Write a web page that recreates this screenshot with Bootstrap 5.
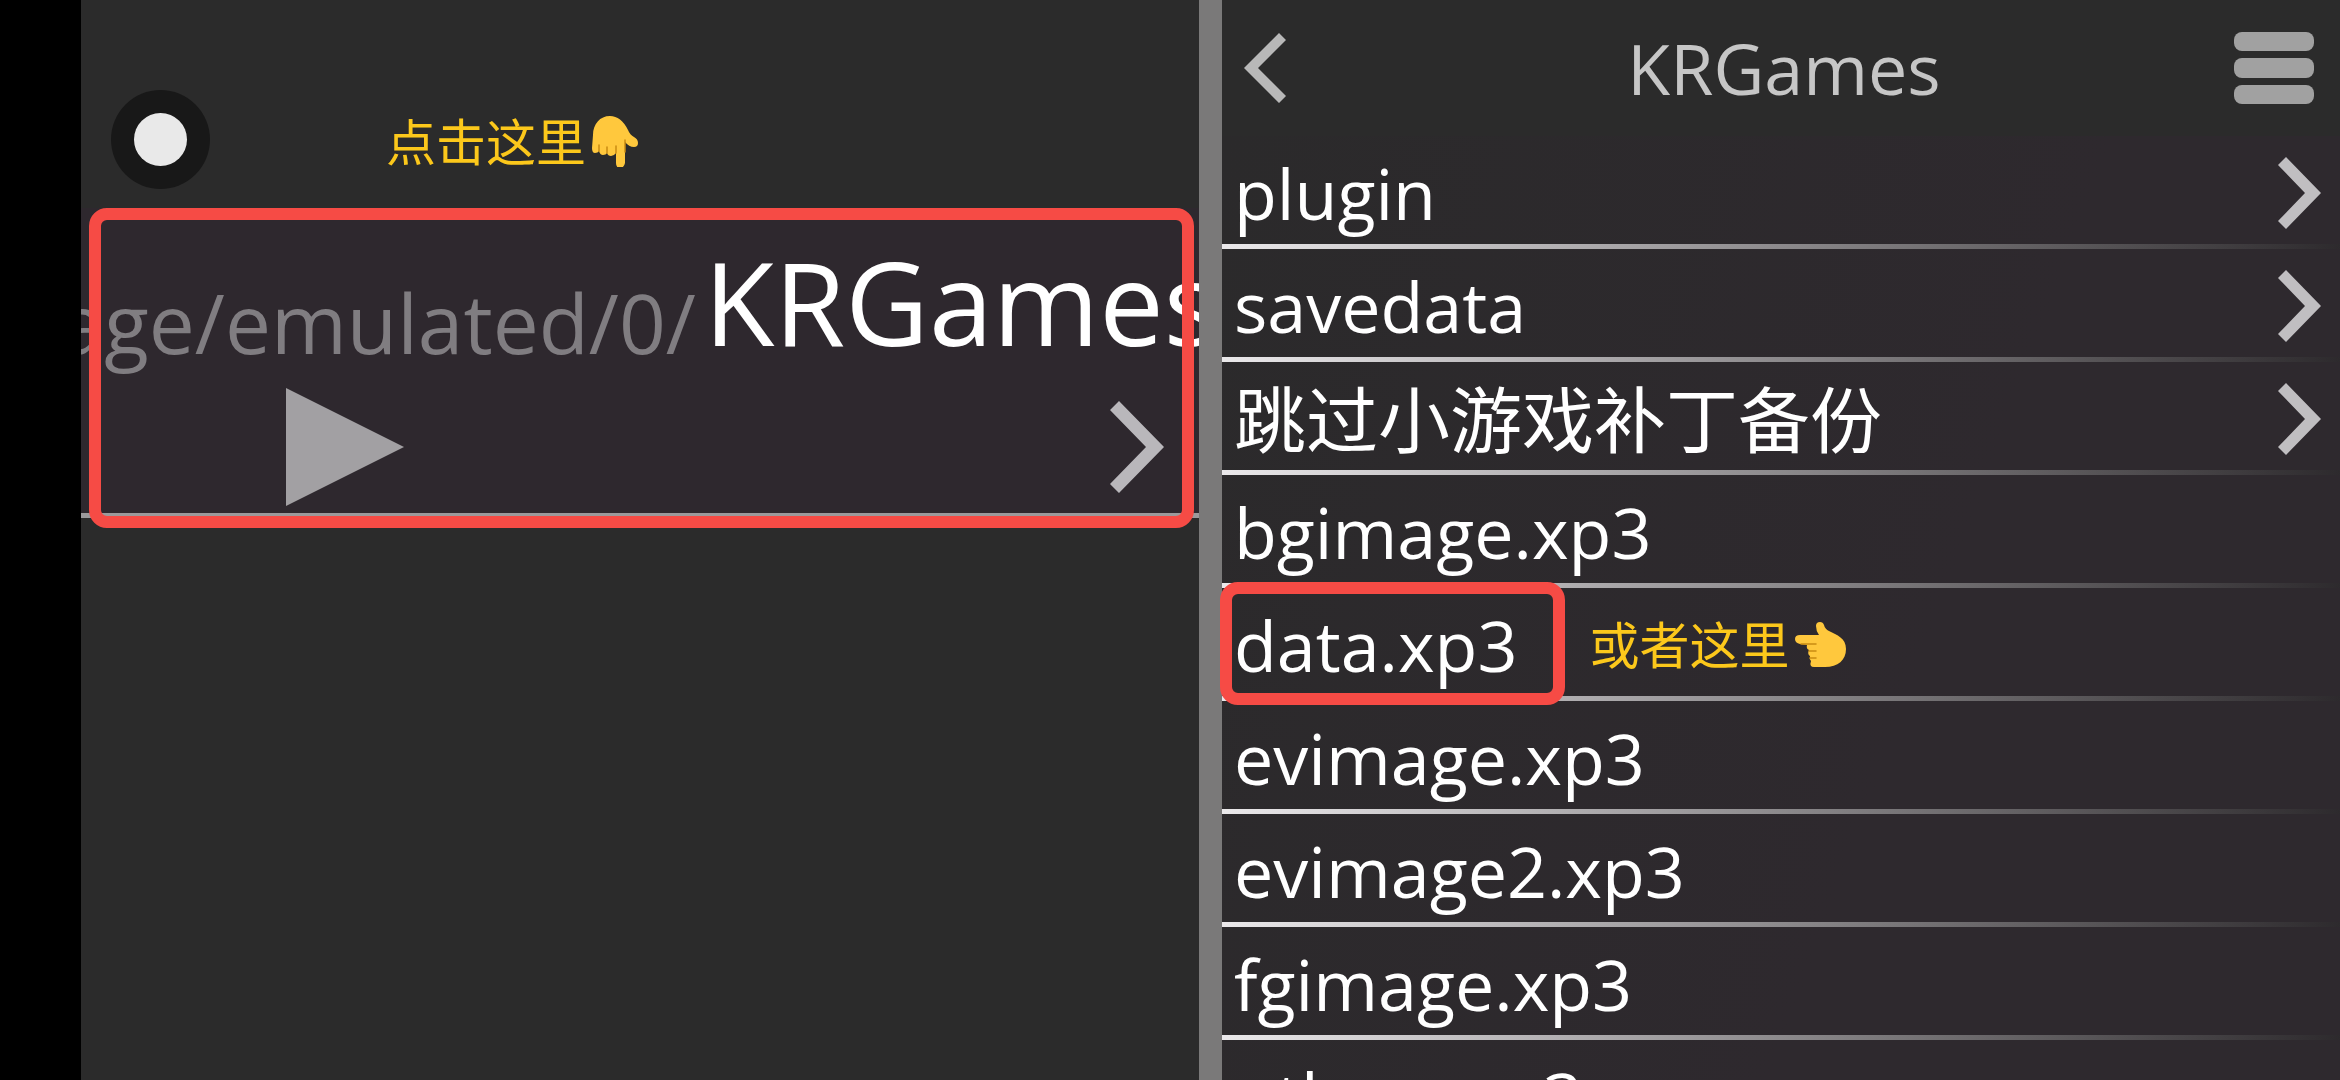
<!DOCTYPE html>
<html lang="zh-CN">
<head>
<meta charset="utf-8">
<meta name="viewport" content="width=device-width, initial-scale=1">
<title>KRGames</title>
<link rel="stylesheet" href="https://cdn.jsdelivr.net/npm/bootstrap@5.3.0/dist/css/bootstrap.min.css">
<style>
  body { background: #2b2b2b; color: #fff; font-family: "Open Sans", "Noto Sans CJK SC", sans-serif; }
  a { color: inherit; text-decoration: none; }
  button { background: none; border: 0; padding: 0; }
  svg { display: block; flex: none; }
  .notch { width: 81px; background: #000; }
  .splitter { width: 23px; background: #7a7979; }
  .pane { flex: 1 1 0; min-width: 0; }
  .hint { font-size: 50px; line-height: 56px; color: #fcc81b; gap: 6px; }
  .marker { position: absolute; border: 12px solid #f64b45; border-radius: 18px; pointer-events: none; }

  .touch-bar { height: 208px; padding: 71px 30px 0; gap: 176px; }
  .recent { height: 310px; background: #2e282e; border-bottom: 5px solid #9c9a9c; }
  .recent .marker { inset: 0 5px -15px 8px; }
  .recent-path { height: 180px; line-height: 180px; white-space: nowrap; }
  .parent-dir { width: 55%; padding-top: 24px; font-size: 82px; color: #807d81; }
  .folder { font-size: 115px; padding: 4px 0 0 8px; }
  .recent-tools { padding: 0 35px 0 205px; height: 118px; }

  .title-bar { height: 136px; padding: 0 26px 0 22px; color: #c6c6c6; }
  .title-bar h1 { font-size: 70px; line-height: 96px; font-weight: 400; }
  .back { width: 90px; }
  .file { height: 113px; padding: 5px 19px 0 12px; font-size: 70px; line-height: 108px; border-bottom: 5px solid; border-image: linear-gradient(90deg, #ebe9eb, #2d2a2d) 1; gap: 24px; white-space: nowrap; }
  .file-cjk { font-size: 72px; }
  .file-list { background: linear-gradient(110deg, #2b2a2b, #2e292e 60%); }
  .picked { padding-right: 48px; }
  .picked .marker { inset: -9px 0 -6px -14px; }
</style>
<script src="https://cdn.jsdelivr.net/npm/bootstrap@5.3.0/dist/js/bootstrap.bundle.min.js"></script>
</head>
<body>
<svg class="d-none">
  <symbol id="next" viewBox="0 0 43 72"><path d="M8 0 43 36 8 72 0 64 27 36 0 8z" fill="#c0bec1"/></symbol>
</svg>
<div class="d-flex vh-100 overflow-hidden">
  <div class="notch flex-shrink-0"></div>

  <main class="pane overflow-hidden">
    <div class="touch-bar d-flex align-items-center">
      <button type="button" aria-label="悬浮按钮"><svg width="99" height="99" viewBox="0 0 99 99"><circle cx="49.500" cy="49.500" r="49.500" fill="#181818"/><circle cx="49.500" cy="49.500" r="26.500" fill="#e9e9e9"/></svg></button>
      <div class="hint d-flex align-items-center pt-1">点击这里
        <svg width="46" height="51" viewBox="0 0 46 51"><path d="M18 0C8 0 1 8 1 19L0 32q0 5 3 5 3 0 4-2 1 4 4 4 3 0 4-2 1 3 4 3t5-3v10q0 5 4 5t5-5V26q4 5 9 5 4 0 4-4t-4-6q-4-2-6-7Q29 0 18 0z" fill="#ffc83d"/><path d="M7 29v6M15 31v6M24 30v7M33 24v12" stroke="#c98a12" stroke-width="1.500" stroke-linecap="round"/></svg>
      </div>
    </div>
    <div class="recent position-relative">
      <div class="recent-path d-flex">
        <div class="parent-dir d-flex justify-content-end overflow-hidden flex-shrink-0">/storage/emulated/0/</div>
        <div class="folder">KRGames</div>
      </div>
      <div class="recent-tools d-flex align-items-center justify-content-between">
        <button type="button" aria-label="运行"><svg width="118" height="118" viewBox="0 0 118 118"><path d="M0 0 118 59 0 118z" fill="#a2a0a3"/></svg></button>
        <a href="#files" aria-label="打开"><svg width="54" height="92" viewBox="0 0 54 92"><path d="M9 0 54 46 9 92 0 83 36 46 0 9z" fill="#b9b7bb"/></svg></a>
      </div>
      <div class="marker"></div>
    </div>
  </main>

  <div class="splitter flex-shrink-0"></div>

  <section class="pane" id="files">
    <header class="title-bar d-flex align-items-center justify-content-between">
      <button type="button" class="back" aria-label="返回"><svg width="42" height="70" viewBox="0 0 42 70"><path d="M35 0 42 7 14 35 42 63 35 70 0 35z" fill="#b8b8b8"/></svg></button>
      <h1 class="m-0">KRGames</h1>
      <button type="button" aria-label="菜单"><svg width="80" height="72" viewBox="0 0 80 72" fill="#a1a1a1"><rect width="80" height="19" rx="8"/><rect y="26" width="80" height="20" rx="8"/><rect y="53" width="80" height="19" rx="8"/></svg></button>
    </header>
    <nav class="file-list d-flex flex-column">
      <a href="#" class="file d-flex align-items-center justify-content-between">plugin<svg width="43" height="72"><use href="#next"/></svg></a>
      <a href="#" class="file d-flex align-items-center justify-content-between">savedata<svg width="43" height="72"><use href="#next"/></svg></a>
      <a href="#" class="file file-cjk d-flex align-items-center justify-content-between">跳过小游戏补丁备份<svg width="43" height="72"><use href="#next"/></svg></a>
      <a href="#" class="file d-flex align-items-center">bgimage.xp3</a>
      <a href="#" class="file d-flex align-items-center"><span class="picked position-relative">data.xp3<span class="marker"></span></span>
        <span class="hint d-flex align-items-center">或者这里
          <svg width="51" height="45" viewBox="0 0 51 45"><path d="M25 0q-4 0-4 4 0 5 3 9H5q-5 0-5 4t5 5l7 1q-1 4 2 5-2 4 1 6-1 3 1 5-2 6 3 6h11c13 0 21-7 21-18S42 13 34 9Q30 7 29 3q-1-3-4-3z" fill="#ffc83d"/><path d="M6 22h15M14 29h7M15 36h6" stroke="#c98a12" stroke-width="1.500" stroke-linecap="round"/></svg></span></a>
      <a href="#" class="file d-flex align-items-center">evimage.xp3</a>
      <a href="#" class="file d-flex align-items-center">evimage2.xp3</a>
      <a href="#" class="file d-flex align-items-center">fgimage.xp3</a>
      <a href="#" class="file d-flex align-items-center">others.xp3</a>
    </nav>
  </section>
</div>
</body>
</html>
